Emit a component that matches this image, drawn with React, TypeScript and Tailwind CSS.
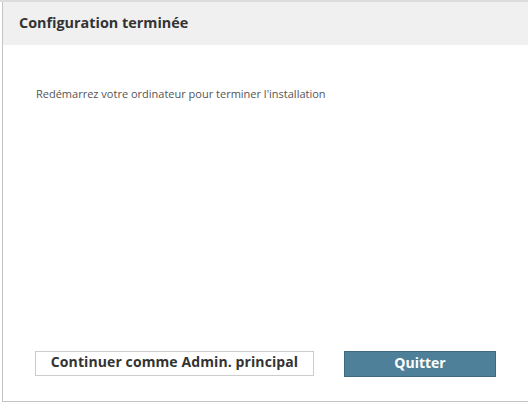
import React from "react";

export default function App() {
  return (
    <div
      className="w-[528px] h-[403px] bg-white border-t-2 border-[#dcdcdc] overflow-hidden"
      style={{ fontFamily: '"Open Sans", "Noto Sans", sans-serif' }}
    >
      <div className="ml-[2px] h-[400px] border-l border-b border-[#c4c4c4] flex flex-col">
        <div className="h-[43px] bg-[#f0f0f0] flex items-center pl-[16px]">
          <h1 className="text-[14.4px] font-bold text-[#333333] leading-none">Configuration terminée</h1>
        </div>
        <div className="flex-1 flex flex-col">
          <p className="mt-[42px] ml-[33px] text-[11px] text-[#555555] leading-[14px]">
            Redémarrez votre ordinateur pour terminer l'installation
          </p>
          <div className="mt-auto mb-[24px] flex pl-[32px] gap-[30px]">
            <button className="w-[279px] h-[25px] pb-[3px] border border-[#cccccc] bg-white text-[14px] font-bold text-[#333333] leading-none tracking-[0.1px]">
              Continuer comme Admin. principal
            </button>
            <button className="w-[152px] h-[26px] pb-[2px] border border-[#3d6a82] bg-[#4f8099] text-[14px] font-bold text-white leading-none">
              Quitter
            </button>
          </div>
        </div>
      </div>
    </div>
  );
}
